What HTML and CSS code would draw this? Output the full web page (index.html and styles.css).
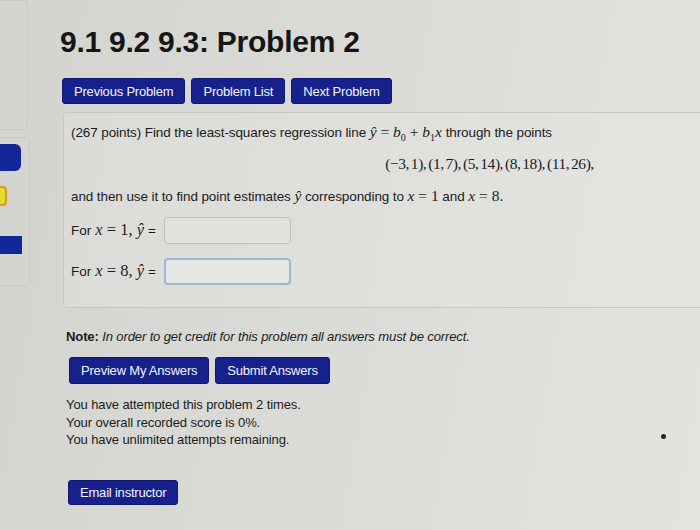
FILE: index.html
```html
<!DOCTYPE html>
<html>
<head>
<meta charset="utf-8">
<link rel="stylesheet" href="styles.css">
</head>
<body>
<div class="page">
  <aside class="sidebar">
    <div class="side-top"></div>
    <div class="side-box">
      <div class="side-blue tall"></div>
      <div class="side-yellow"></div>
      <div class="side-blue flat"></div>
    </div>
  </aside>
  <main class="main">
    <h1 class="title">9.1 9.2 9.3: Problem 2</h1>
    <nav class="nav">
      <button class="btn">Previous Problem</button>
      <button class="btn">Problem List</button>
      <button class="btn">Next Problem</button>
    </nav>
    <section class="problem">
      <p class="line">(267 points) Find the least-squares regression line <span class="m"><i>ŷ</i> = <i>b</i><sub>0</sub> + <i>b</i><sub>1</sub><i>x</i></span> through the points</p>
      <p class="line center"><span class="m pts">(−3, 1), (1, 7), (5, 14), (8, 18), (11, 26),</span></p>
      <p class="line">and then use it to find point estimates <span class="m"><i>ŷ</i></span> corresponding to <span class="m"><i>x</i> = 1</span> and <span class="m"><i>x</i> = 8.</span></p>
      <div class="answer first">For <span class="m"><i>x</i> = 1, <i>ŷ</i></span> = <span class="input"></span></div>
      <div class="answer">For <span class="m"><i>x</i> = 8, <i>ŷ</i></span> = <span class="input focus"></span></div>
    </section>
    <p class="note"><b>Note:</b> <i>In order to get credit for this problem all answers must be correct.</i></p>
    <div class="actions">
      <button class="btn big">Preview My Answers</button>
      <button class="btn big">Submit Answers</button>
    </div>
    <div class="status">
      <div>You have attempted this problem 2 times.</div>
      <div>Your overall recorded score is 0%.</div>
      <div>You have unlimited attempts remaining.</div>
    </div>
    <button class="btn email">Email instructor</button>
  </main>
  <span class="speck"></span>
</div>
</body>
</html>
```

FILE: styles.css
```css
html, body {
  margin: 0;
  padding: 0;
}
body {
  width: 700px;
  height: 530px;
  overflow: hidden;
  background: linear-gradient(100deg, #d3d3cf 0%, #dadad6 45%, #e3e3e0 100%);
  font-family: "Liberation Sans", Arial, sans-serif;
  color: #1c1c1c;
}
.page {
  position: relative;
  display: flex;
  height: 530px;
}
.sidebar {
  width: 30px;
  flex: none;
  display: flex;
  flex-direction: column;
  gap: 7px;
}
.side-top {
  height: 130px;
  border: 1px solid #c9c9c5;
  border-left: none;
  border-radius: 0 0 5px 0;
  width: 28px;
  box-sizing: border-box;
}
.side-box {
  width: 30px;
  height: 149px;
  box-sizing: border-box;
  border: 1px solid #cacac6;
  border-left: none;
  border-radius: 0 5px 5px 0;
  padding-top: 6px;
  display: flex;
  flex-direction: column;
}
.side-blue {
  background: #14279a;
  width: 21px;
}
.side-blue.tall {
  height: 27px;
  border-radius: 0 6px 6px 0;
}
.side-yellow {
  margin-top: 15px;
  width: 7px;
  height: 20px;
  box-sizing: border-box;
  background: #e8dc2a;
  border: 2px solid #d49a2a;
  border-left: none;
  border-radius: 0 4px 4px 0;
}
.side-blue.flat {
  margin-top: 30px;
  height: 18px;
  width: 22px;
}
.main {
  flex: none;
  width: 670px;
  padding-left: 30px;
  box-sizing: border-box;
  overflow: hidden;
}
.title {
  margin: 27px 0 0 0;
  font-size: 30px;
  line-height: 30px;
  font-weight: bold;
  letter-spacing: -0.25px;
  color: #161616;
}
.nav {
  display: flex;
  gap: 6px;
  margin-top: 21px;
  padding-left: 2px;
}
.btn {
  font-family: "Liberation Sans", Arial, sans-serif;
  font-size: 13px;
  color: #f4f4f8;
  background: #16218c;
  border: 1px solid #0f1870;
  border-radius: 3px;
  height: 26px;
  padding: 0 11px;
  letter-spacing: -0.2px;
}
.problem {
  margin-top: 8px;
  margin-left: 3px;
  width: 854px;
  box-sizing: border-box;
  height: 196px;
  border: 1px solid #c7c7c3;
  border-radius: 4px;
  background: rgba(232, 232, 228, 0.35);
  padding: 10px 0 0 7px;
}
.line {
  margin: 0;
  height: 32px;
  line-height: 18px;
  font-size: 13.5px;
  letter-spacing: -0.1px;
}
.center {
  text-align: center;
  padding-right: 8px;
}
.m {
  font-family: "Liberation Serif", "Times New Roman", serif;
  font-size: 15.5px;
  letter-spacing: 0;
}
.m sub {
  font-size: 10px;
}
.m.pts {
  font-size: 15.5px;
  word-spacing: -1.5px;
  letter-spacing: -0.45px;
}
.answer {
  display: flex;
  align-items: center;
  font-size: 13.5px;
  gap: 4px;
  height: 28px;
}
.answer .m {
  font-size: 16.5px;
}
.answer.first {
  margin-top: -3px;
}
.answer + .answer {
  margin-top: 13px;
}
.input {
  display: inline-block;
  width: 127px;
  height: 27px;
  box-sizing: border-box;
  border: 1px solid #c0c0bb;
  border-radius: 4px;
  background: #e2e2df;
  margin-left: 4px;
}
.input.focus {
  border: 2px solid #9fb6d2;
  background: #e6e6e4;
}
.note {
  margin: 20px 0 0 6px;
  font-size: 13.1px;
  line-height: 18px;
  letter-spacing: -0.15px;
}
.actions {
  display: flex;
  gap: 6px;
  margin: 11px 0 0 9px;
}
.btn.big {
  height: 27px;
}
.status {
  margin: 12px 0 0 6px;
  font-size: 13px;
  line-height: 17.5px;
  letter-spacing: -0.1px;
}
.btn.email {
  display: block;
  margin: 31px 0 0 8px;
  height: 25px;
}
.speck {
  position: absolute;
  left: 661px;
  top: 434px;
  width: 5px;
  height: 5px;
  border-radius: 50%;
  background: #222;
}
```
